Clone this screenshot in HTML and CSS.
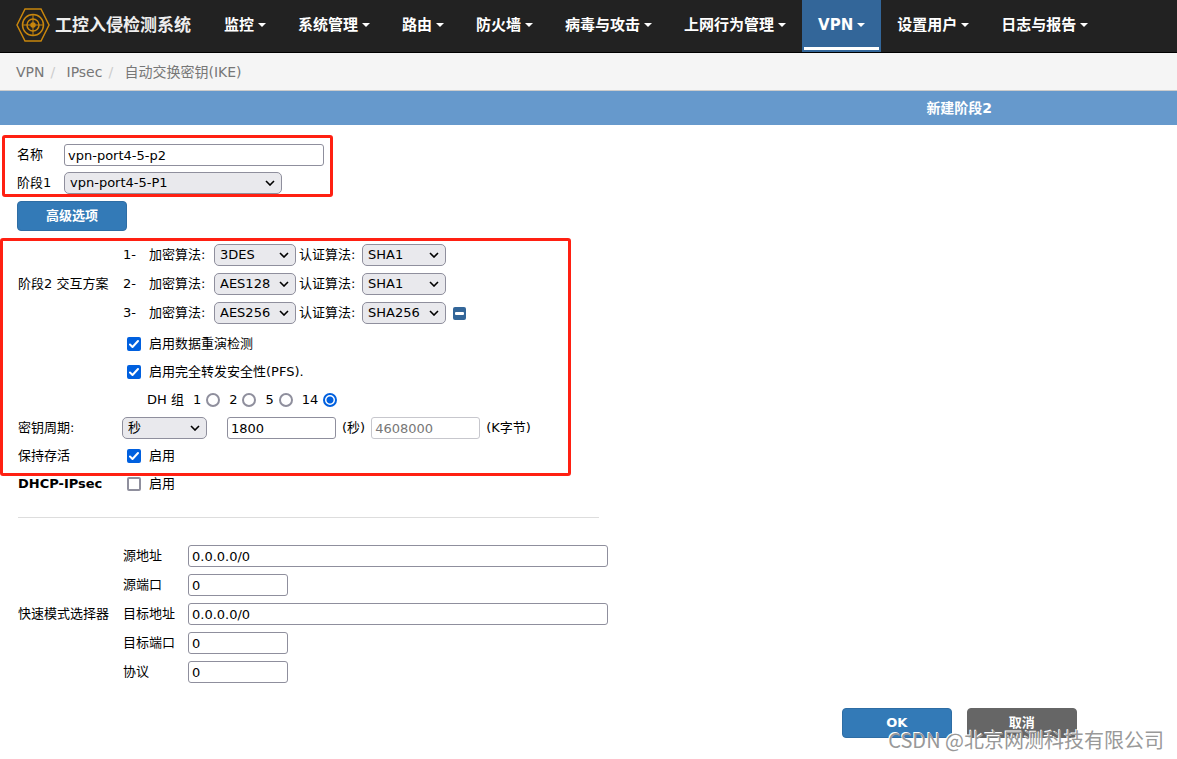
FILE: index.html
```html
<!DOCTYPE html>
<html lang="zh-CN">
<head>
<meta charset="utf-8">
<title>工控入侵检测系统 - VPN</title>
<link rel="stylesheet" href="styles.css">
</head>
<body>
<header class="topbar">
  <a class="brand" href="#">
    <svg class="brand-icon" viewBox="0 0 34 34" fill="none" stroke="#c8860d" stroke-width="1.5">
      <path d="M9 1H25L33 17L25 33H9L1 17Z"/>
      <circle cx="17" cy="17" r="10.5"/>
      <circle cx="17" cy="17" r="6"/>
      <circle cx="17" cy="17" r="2" fill="#c8860d"/>
      <path d="M17 6V28M6 17H28" stroke-width="1"/>
    </svg>
    <span>工控入侵检测系统</span>
  </a>
  <nav class="menu">
    <a href="#">监控<i class="caret"></i></a>
    <a href="#">系统管理<i class="caret"></i></a>
    <a href="#">路由<i class="caret"></i></a>
    <a href="#">防火墙<i class="caret"></i></a>
    <a href="#">病毒与攻击<i class="caret"></i></a>
    <a href="#">上网行为管理<i class="caret"></i></a>
    <a href="#" class="active">VPN<i class="caret"></i></a>
    <a href="#">设置用户<i class="caret"></i></a>
    <a href="#">日志与报告<i class="caret"></i></a>
  </nav>
</header>

<nav class="breadcrumb">
  <a href="#">VPN</a><span class="sep">/</span><a href="#">IPsec</a><span class="sep">/</span><a href="#">自动交换密钥(IKE)</a>
</nav>

<h1 class="title">新建阶段2</h1>

<form class="form">
  <section class="basic marked">
    <div class="basic-row">
      <label for="name">名称</label>
      <input type="text" id="name" class="w-name" value="vpn-port4-5-p2">
    </div>
    <div class="basic-row">
      <label for="phase1">阶段1</label>
      <select id="phase1" class="w-phase"><option>vpn-port4-5-P1</option></select>
    </div>
  </section>

  <button type="button" class="btn btn-primary advanced">高级选项</button>

  <section class="proposal marked">
    <div class="row algorithms">
      <span>阶段2 交互方案</span>
      <div class="stack">
        <div class="algorithm">
          <span>1-</span>
          <label for="enc1">加密算法:</label>
          <select id="enc1"><option>3DES</option></select>
          <label for="auth1">认证算法:</label>
          <select id="auth1"><option>SHA1</option></select>
        </div>
        <div class="algorithm">
          <span>2-</span>
          <label for="enc2">加密算法:</label>
          <select id="enc2"><option>AES128</option></select>
          <label for="auth2">认证算法:</label>
          <select id="auth2"><option>SHA1</option></select>
        </div>
        <div class="algorithm">
          <span>3-</span>
          <label for="enc3">加密算法:</label>
          <select id="enc3"><option>AES256</option></select>
          <label for="auth3">认证算法:</label>
          <select id="auth3"><option>SHA256</option></select>
          <button type="button" class="remove" aria-label="删除">
            <svg viewBox="0 0 13 13"><rect width="13" height="13" rx="2" fill="#336699"/><rect x="2" y="5" width="9" height="3" rx="1" fill="#fff"/></svg>
          </button>
        </div>
      </div>
    </div>
    <div class="row">
      <span></span>
      <label class="check"><input type="checkbox" checked>启用数据重演检测</label>
    </div>
    <div class="row">
      <span></span>
      <label class="check"><input type="checkbox" checked>启用完全转发安全性(PFS).</label>
    </div>
    <div class="row">
      <span></span>
      <div class="dh">
        <span>DH 组</span>
        <label>1<input type="radio" name="dh"></label>
        <label>2<input type="radio" name="dh"></label>
        <label>5<input type="radio" name="dh"></label>
        <label>14<input type="radio" name="dh" checked></label>
      </div>
    </div>
    <div class="row">
      <label for="life">密钥周期:</label>
      <div class="lifetime">
        <select id="life"><option>秒</option></select>
        <input type="text" id="sec" value="1800">
        <label for="sec">(秒)</label>
        <input type="text" id="kb" value="4608000" disabled>
        <label for="kb">(K字节)</label>
      </div>
    </div>
    <div class="row">
      <span>保持存活</span>
      <label class="check"><input type="checkbox" checked>启用</label>
    </div>
  </section>
  <div class="row">
    <strong>DHCP-IPsec</strong>
    <label class="check"><input type="checkbox">启用</label>
  </div>

  <hr class="divider">

  <section class="row">
    <span>快速模式选择器</span>
    <div class="stack">
      <div class="selector"><label for="src">源地址</label><input type="text" id="src" class="w-address" value="0.0.0.0/0"></div>
      <div class="selector"><label for="sport">源端口</label><input type="text" id="sport" class="w-port" value="0"></div>
      <div class="selector"><label for="dst">目标地址</label><input type="text" id="dst" class="w-address" value="0.0.0.0/0"></div>
      <div class="selector"><label for="dport">目标端口</label><input type="text" id="dport" class="w-port" value="0"></div>
      <div class="selector"><label for="proto">协议</label><input type="text" id="proto" class="w-port" value="0"></div>
    </div>
  </section>

  <div class="actions">
    <button type="button" class="btn btn-primary">OK</button>
    <button type="button" class="btn btn-cancel">取消</button>
  </div>
</form>
<div class="watermark">CSDN @北京网测科技有限公司</div>
</body>
</html>
```
FILE: styles.css
```css
*, *::after { box-sizing: border-box; }

body {
  margin: 0;
  position: relative;
  min-height: 100vh;
  background: #fff;
  color: #000;
  font: 13px/20px "DejaVu Sans", "Noto Sans CJK SC", sans-serif;
  white-space: nowrap;
}

input, select, button { margin: 0; font: inherit; color: inherit; }
a { color: inherit; text-decoration: none; }

/* Top bar */
.topbar {
  display: flex;
  background: #222;
  border-bottom: 1px solid #000;
  color: #fff;
}
.brand {
  display: flex;
  align-items: center;
  gap: 5px;
  width: 208px;
  height: 52px;
  padding: 0 0 3px 16px;
  font-size: 17px;
  font-weight: bold;
  color: #eee;
}
.brand-icon { width: 34px; height: 34px; }
.menu { display: flex; font-size: 15px; font-weight: bold; }
.menu a {
  display: flex;
  align-items: center;
  gap: 4px;
  padding: 0 16px 3px;
}
.menu .active {
  background: #336699;
  border: 2px solid #336699;
  border-top: 0;
  padding: 0 14px;
  box-shadow: inset 0 -3px #fff;
}
.caret {
  border: 4px solid transparent;
  border-top-color: #fff;
  border-bottom: 0;
}

/* Breadcrumb and title */
.breadcrumb {
  display: flex;
  padding: 9px 16px 8px;
  background: #f5f5f5;
  border-bottom: 1px solid #ccc;
  color: #777;
  font-size: 14px;
}
.sep { width: 22px; padding-left: 6px; color: #ccc; }
.title {
  margin: 0;
  padding: 7px 0 7px 63%;
  background: #6699cc;
  color: #fff;
  font-size: 14px;
  line-height: 20px;
  text-align: center;
}

/* Controls */
input[type="text"], select {
  height: 22px;
  border: 1px solid #8f8f9d;
  background-color: #fff;
}
input[type="text"] { padding: 0 3px; border-radius: 3px; }
input[type="text"]:disabled { border-color: #c7c7cd; color: #777; }
select {
  appearance: none;
  padding: 0 5px;
  border-radius: 5px;
  background: #e9e9ed url("data:image/svg+xml,%3Csvg xmlns='http://www.w3.org/2000/svg' width='10' height='6' fill='none' stroke='black' stroke-width='1.6'%3E%3Cpath d='M1 1L5 5L9 1'/%3E%3C/svg%3E") no-repeat right 6px center;
}
input[type="checkbox"], input[type="radio"] {
  appearance: none;
  width: 14px;
  height: 14px;
  border: 2px solid #8f8f9d;
  border-radius: 2px;
  background: #fff;
}
input[type="radio"] { border-radius: 50%; }
input[type="checkbox"]:checked {
  border-color: #0060df;
  background: #0060df url("data:image/svg+xml,%3Csvg xmlns='http://www.w3.org/2000/svg' width='10' height='10' fill='none' stroke='white' stroke-width='2' stroke-linecap='round' stroke-linejoin='round'%3E%3Cpath d='M1 5.5L3.5 8L9 2'/%3E%3C/svg%3E") no-repeat center;
}
input[type="radio"]:checked {
  border-color: #0060df;
  background: radial-gradient(circle, #0060df 3px, #fff 4px);
}
.w-name { width: 260px; }
.w-phase { width: 218px; }
.w-address { width: 420px; }
.w-port { width: 100px; }

.btn {
  width: 110px;
  height: 30px;
  border: 1px solid #2e6da4;
  border-radius: 4px;
  color: #fff;
  font-weight: bold;
}
.btn-primary { background: #337ab7; }
.btn-cancel { background: #666; border-color: #666; }

/* Form */
.form { padding: 10px 0 20px; }
.marked { position: relative; }
.marked::after {
  content: "";
  position: absolute;
  top: 0;
  bottom: 0;
  left: 0;
  width: 571px;
  border: 3px solid #ff2012;
  border-radius: 3px;
  pointer-events: none;
}
.basic { padding: 6px 0 0 17px; }
.basic.marked::after { left: 2px; width: 331px; }
.basic-row {
  display: grid;
  grid-template-columns: 47px 1fr;
  align-items: center;
  justify-items: start;
  height: 28px;
}
.advanced { display: block; margin: 4px 0 7px 17px; }
.proposal { padding: 6px 0 6px; margin-bottom: -6px; }

.row {
  display: grid;
  grid-template-columns: 105px 1fr;
  align-items: center;
  min-height: 28px;
  padding-left: 18px;
}
.algorithms { margin-bottom: 6px; }
.stack { display: grid; gap: 7px; }
.algorithm {
  display: grid;
  grid-template-columns: 26px 65px 85px 63px 91px 13px;
  align-items: center;
}
.algorithm select { width: 82px; }
.algorithm select:nth-of-type(2) { width: 84px; }
.remove { display: flex; padding: 0; border: 0; background: none; }
.remove svg { width: 13px; height: 13px; }
.check {
  display: flex;
  align-items: center;
  gap: 8px;
  padding-left: 4px;
}
.dh { display: flex; gap: 9px; padding-left: 24px; }
.dh label { display: flex; align-items: center; gap: 5px; }
.lifetime { display: flex; align-items: center; gap: 6px; }
.lifetime select { width: 85px; margin: 0 14px 0 -1px; }
.lifetime input { width: 109px; }

.divider {
  width: 581px;
  margin: 19px 0 27px 18px;
  border: 0;
  border-top: 1px solid #ddd;
}
.selector {
  display: grid;
  grid-template-columns: 65px 1fr;
  align-items: center;
}
.actions {
  display: flex;
  justify-content: center;
  gap: 15px;
  margin-top: 25px;
  padding-left: 63%;
}

.watermark {
  position: absolute;
  right: 13px;
  bottom: 5px;
  color: #999;
  font: 20px/28px "Noto Sans CJK SC", sans-serif;
  text-shadow: -1px -1px #fff;
}
```
